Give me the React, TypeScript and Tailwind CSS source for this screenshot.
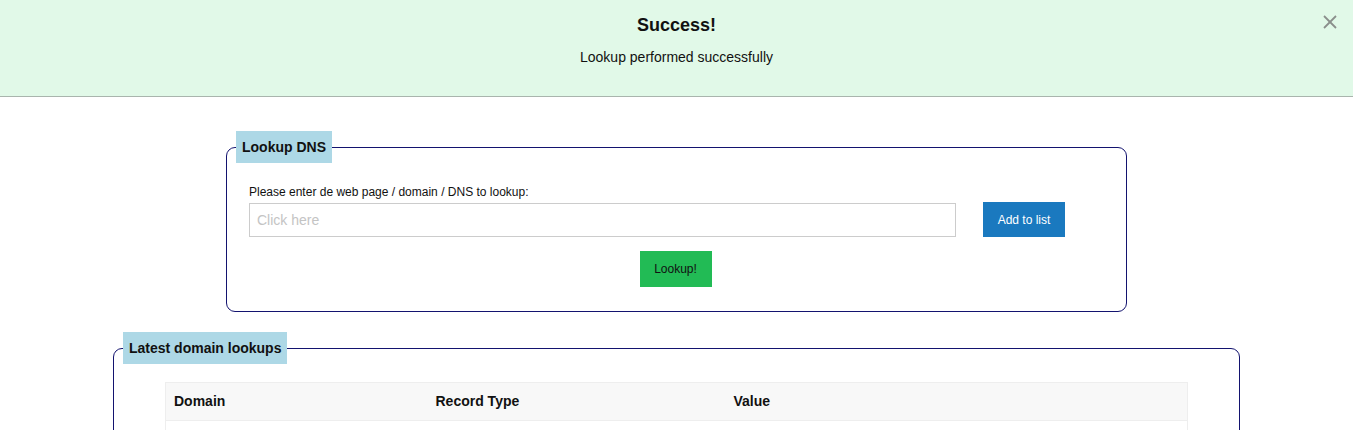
const headers = [
  { label: "Domain", width: "w-[262px]" },
  { label: "Record Type", width: "w-[298px]" },
  { label: "Value", width: "" },
];

const SuccessBanner = () => (
  <div className="relative h-[97px] border-b border-[#a9b5ad] bg-[#e1f9e8] text-center text-[#111]">
    <h2 className="pt-[14px] text-[18px] font-bold leading-[22px]">Success!</h2>
    <p className="mt-[13px] text-[14px] leading-[17px]">Lookup performed successfully</p>
    <button className="absolute right-[16px] top-[14px] flex h-[15px] w-[15px] items-center justify-center text-[#8a8f8c]">
      <svg viewBox="0 0 14 14" className="h-[14px] w-[14px]" stroke="currentColor" strokeWidth="1.8">
        <line x1="1" y1="1" x2="13" y2="13" />
        <line x1="13" y1="1" x2="1" y2="13" />
      </svg>
    </button>
  </div>
);

const App = () => {
  return (
    <div className="min-h-[430px] bg-white font-['Liberation_Sans',Arial,sans-serif] text-[#111]">
      <SuccessBanner />

      <fieldset className="mx-auto mt-[34px] w-[901px] rounded-[9px] border border-[#13136f] pl-[9px]">
        <legend className="bg-[#add8e6] px-[6px] py-[7px] text-[14px] font-bold leading-[18px]">
          Lookup DNS
        </legend>
        <div className="pl-[13px] pt-[22px] pb-[24px]">
          <label className="block text-[12px] leading-[14px]">
            Please enter de web page / domain / DNS to lookup:
          </label>
          <div className="mt-[4px] flex items-start gap-[27px]">
            <input
              type="text"
              placeholder="Click here"
              className="h-[34px] w-[707px] border border-[#cccccc] px-[7px] text-[14px] placeholder:text-[#c4c4c4] focus:outline-none"
            />
            <button className="-mt-[1px] h-[35px] w-[82px] bg-[#1a79bf] text-[12px] text-white">
              Add to list
            </button>
          </div>
          <div className="mt-[14px] flex justify-center pr-[24px]">
            <button className="h-[36px] w-[72px] bg-[#22bb55] text-[12px] text-[#111]">
              Lookup!
            </button>
          </div>
        </div>
      </fieldset>

      <fieldset className="mx-auto mt-[20px] w-[1127px] rounded-[9px] border border-[#13136f] pl-[9px]">
        <legend className="bg-[#add8e6] px-[6px] py-[7px] text-[14px] font-bold leading-[18px]">
          Latest domain lookups
        </legend>
        <div className="pl-[42px] pr-[51px] pt-[18px] pb-[20px]">
          <table className="w-full border-collapse border border-[#eeeeee]">
            <thead>
              <tr className="bg-[#f8f8f8]">
                {headers.map((h) => (
                  <th
                    key={h.label}
                    className={`${h.width} h-[38px] border-b border-[#eeeeee] px-[8px] text-left text-[14px] font-bold`}
                  >
                    {h.label}
                  </th>
                ))}
              </tr>
            </thead>
            <tbody>
              <tr>
                <td className="h-[38px] px-[8px] text-[14px]" colSpan={3}></td>
              </tr>
            </tbody>
          </table>
        </div>
      </fieldset>
    </div>
  );
};

export default App;
